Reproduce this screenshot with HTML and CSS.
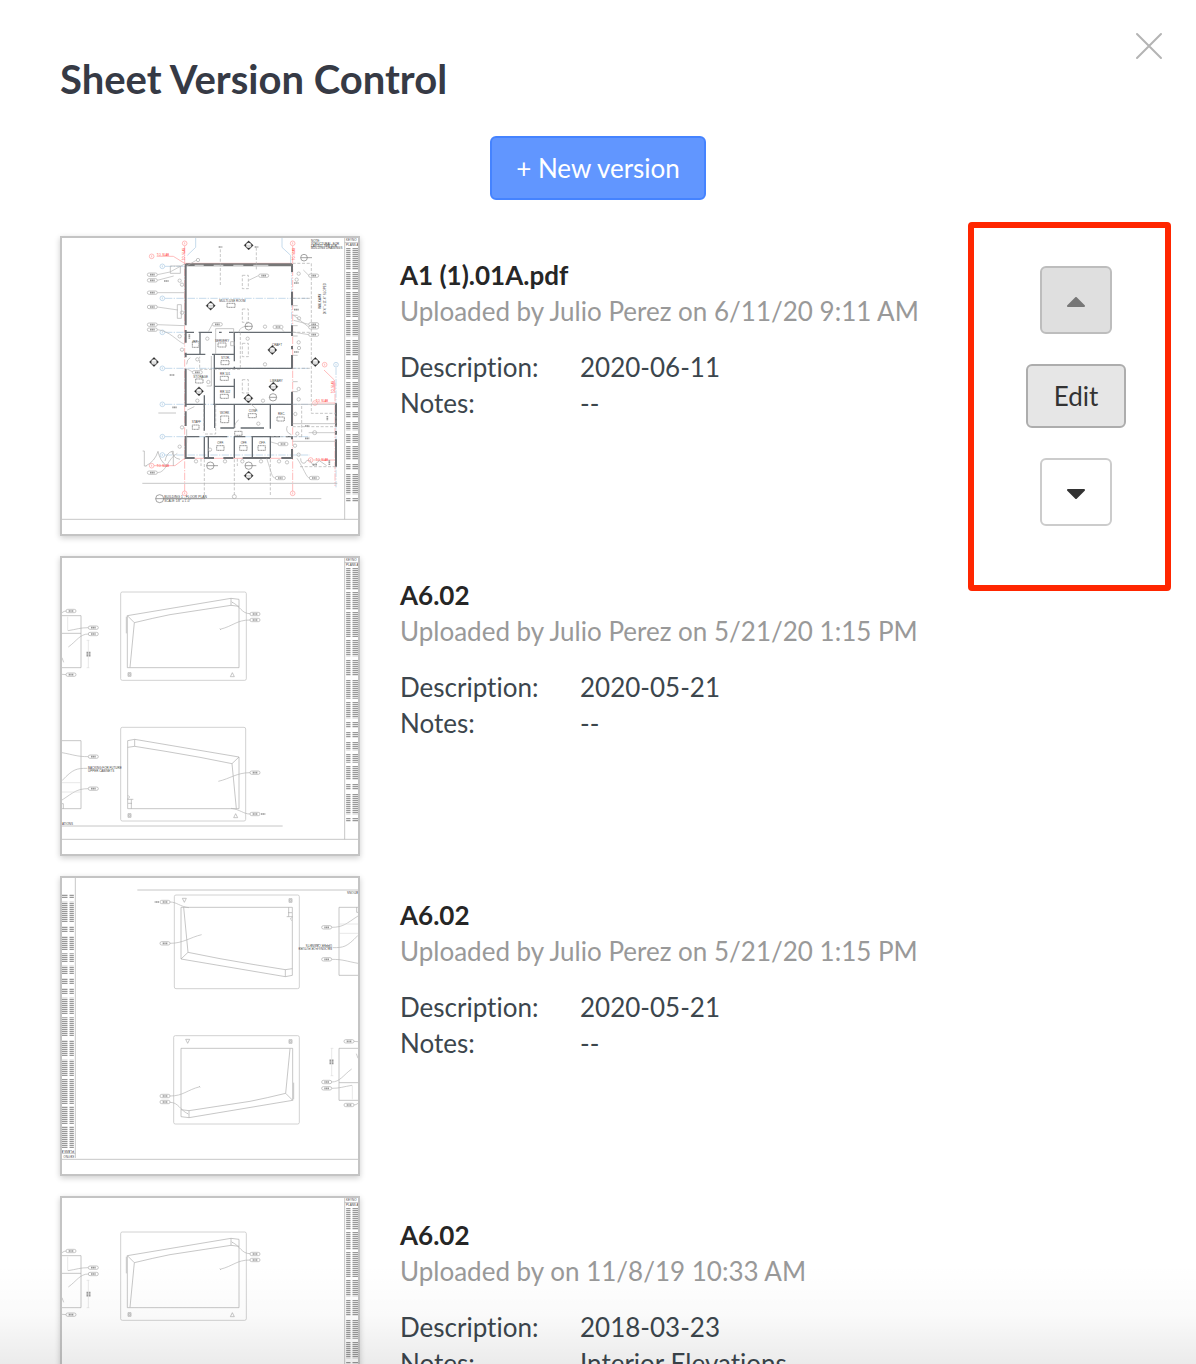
FILE: index.html
```html
<!DOCTYPE html>
<html lang="en">
<head>
    <meta charset="UTF-8">
    <meta name="viewport" content="width=device-width, initial-scale=1.0">
    <title>Sheet Version Control</title>
    <link rel="stylesheet" href="styles.css">
</head>
<body>
    <!-- shared drawing parts -->
    <svg class="defs" width="0" height="0" aria-hidden="true">
        <defs>
            <g id="keynotes">
                <path class="line" d="M884 36V880M884 50H924"/>
                <text class="note" x="888" y="45">KEYNO</text>
                <text class="note" x="888" y="61">PLANS A</text>
                <path class="codes" d="M895 66V131M895 138V190M895 198V273M895 282V331M895 342V390M895 402V458M895 468V517M895 528V546M895 558V576M895 588V613M895 624V650M895 660V701M895 714V732M895 744V805M895 816V828"/>
                <path class="codes wide" d="M916 66V131M916 138V190M916 198V273M916 282V331M916 342V390M916 402V458M916 468V517M916 528V546M916 558V576M916 588V613M916 624V650M916 660V701M916 714V732M916 744V805M916 816V828"/>
            </g>
            <g id="tag">
                <rect class="tag" x="-15" y="-5" width="30" height="10" rx="5"/>
                <path class="tag-text" d="M-7 0H8"/>
            </g>
            <g id="marker">
                <path d="M0-14L14 0L0 14L-14 0Z"/>
                <circle r="8"/>
                <path d="M-8 0H8M-4 4H4"/>
            </g>
            <g id="bubble">
                <circle r="7"/>
                <path d="M0-3V3"/>
            </g>
            <g id="elevations">
                <use href="#keynotes"/>
                <!-- upper elevation -->
                <rect class="frame" x="212" y="138" width="377" height="265" rx="5"/>
                <path class="line" d="M232 209V365H567V160L543 157L232 209L253 230L240 364M543 157V178L567 181M253 230Q310 216 360 206L543 178M229 212V262"/>
                <path class="thin" d="M547 169C570 180 575 203 600 203M510 250C550 240 560 222 600 222M545 167l4 4M509 248l4 4"/>
                <use href="#tag" x="615" y="204"/>
                <use href="#tag" x="615" y="222"/>
                <path class="line" d="M234 380h9v11h-9zM236 383h5v5h-5zM547 380l6 12h-12z"/>
                <!-- lower elevation -->
                <rect class="frame" x="212" y="544" width="375" height="281" rx="5"/>
                <path class="line" d="M233 584V788H567V633L254 580L233 584M233 604L254 601V580M254 601Q350 616 450 634L546 653L567 633M546 653L559 788M232 760H250M234 772H246M244 760V788M234 748l5 5-5 5"/>
                <path class="thin" d="M505 706C540 698 560 680 600 680M543 787C570 790 580 804 600 804"/>
                <use href="#tag" x="615" y="680"/>
                <use href="#tag" x="615" y="804"/>
                <path class="tag-text" d="M633 804H646"/>
                <path class="line" d="M234 803h9v11h-9zM236 806h5v5h-5zM557 803l6 12h-12z"/>
                <!-- neighbours cut by the sheet edge -->
                <path class="line" d="M36 209H93V365H36M36 262H93M36 584H93V788H36M36 773H40V788"/>
                <path class="thin" d="M36 200Q42 195 49 195M54 254C80 250 90 245 115 245M55 303C80 285 90 264 115 264M36 385L49 386M36 620C70 626 80 632 115 632M36 704C70 668 80 667 112 667M36 762C70 740 80 728 115 728M36 335l5 14"/>
                <path class="faint" d="M53 212V254M115 283V365M110 283h8M110 365h8M36 710H93M36 738H93"/>
                <use href="#tag" x="63" y="195"/>
                <use href="#tag" x="130" y="245"/>
                <use href="#tag" x="130" y="264"/>
                <use href="#tag" x="63" y="386"/>
                <use href="#tag" x="130" y="632"/>
                <use href="#tag" x="130" y="728"/>
                <path class="tag-text" d="M112 317V333M119 317V333"/>
                <text class="note" x="114" y="669">BACKING FOR FUTURE</text>
                <text class="note" x="114" y="678">UPPER CABINETS</text>
                <text class="note" x="36" y="837">ATIONS</text>
                <path class="line" d="M36 840H698"/>
            </g>
            <path id="sheet-edge" class="line" d="M36 880H924"/>
        </defs>
    </svg>

    <div class="modal" role="dialog" aria-labelledby="modalTitle">
        <header class="modal-header">
            <h1 id="modalTitle">Sheet Version Control</h1>
            <button class="close" type="button" aria-label="Close">
                <svg width="28" height="28" viewBox="0 0 28 28"><path d="M2 2L26 26M26 2L2 26"/></svg>
            </button>
        </header>

        <button class="button primary" type="button">+ New version</button>

        <ul class="versions">
            <li class="version">
                <svg class="thumb" viewBox="36 36 888 888" role="img" aria-label="Floor plan">
                    <use href="#keynotes"/>
                    <use href="#sheet-edge"/>
                    <!-- grid lines -->
                    <g class="grid-blue">
                        <path d="M345 121H410M345 217H780M345 319H410M345 427H780M345 535H780M345 632H780M345 687H780M858 425V784M725 121V300"/>
                        <path class="solid" d="M437 36V64L412 88M696 36V64L722 88V112"/>
                        <use href="#bubble" x="337" y="121"/>
                        <use href="#bubble" x="337" y="217"/>
                        <use href="#bubble" x="337" y="319"/>
                        <use href="#bubble" x="337" y="427"/>
                        <use href="#bubble" x="337" y="535"/>
                        <use href="#bubble" x="337" y="632"/>
                        <use href="#bubble" x="337" y="687"/>
                        <use href="#bubble" x="858" y="416"/>
                    </g>
                    <g class="grid-red">
                        <path d="M404 60V800M728 60V800M855 470V780"/>
                        <path class="solid" d="M320 91H370L404 112H725M312 719H375L404 697H728M800 531H855M822 432L853 462V500M790 702H855"/>
                        <use href="#bubble" x="404" y="52"/>
                        <use href="#bubble" x="728" y="52"/>
                        <use href="#bubble" x="305" y="91"/>
                        <use href="#bubble" x="404" y="802"/>
                        <use href="#bubble" x="728" y="802"/>
                        <use href="#bubble" x="824" y="416"/>
                        <use href="#bubble" x="795" y="531"/>
                        <use href="#bubble" x="782" y="702"/>
                        <use href="#bubble" x="305" y="719"/>
                    </g>
                    <g class="slab">
                        <text x="320" y="89">T.O. SLAB</text>
                        <text x="320" y="724">T.O. SLAB</text>
                        <text x="797" y="529">T.O. SLAB</text>
                        <text x="797" y="705">T.O. SLAB</text>
                        <text transform="translate(405 103) rotate(-90)">T.O. SLAB</text>
                        <text transform="translate(736 103) rotate(-90)">T.O. SLAB</text>
                        <text transform="translate(852 502) rotate(-90)">T.O. SLAB</text>
                    </g>
                    <!-- walls -->
                    <path class="wall outer" d="M407 114V298M407 312V350M407 380V394M407 428V542M407 556V600M407 630V696H434M462 696H492M520 696H550M578 696H660M694 696H726V669M726 114V138M726 197V238M726 298V330M726 360V370M726 387V428M726 497V600M726 630V640M858 532V602M858 615V626M858 640V722"/>
                    <path class="wall double" d="M407 116H726"/>
                    <path class="wall-gap" d="M434 118H461M491 118H520M550 118H580M610 118H655"/>
                    <path class="wall" d="M407 319H432M446 319H486M507 319H515M537 319H726M450 319V385M407 385H466M486 385H552M553 319V406M553 422V430M553 458V517M493 385V427H726M493 427V535M493 481H553M463 508V614M407 535H466M490 535H726M494 535V606M553 535V606M511 606H553M572 606H642M661 535V608M407 632H448M466 632H532M552 632H586M604 632H690M708 632H726M475 632V696M463 632V696M553 632V696M607 632V696M661 632V696"/>
                    <path class="line" d="M497 319V308H551V342M497 319V385M484 390V480H470M542 347h11v12h-11zM382 236h12v41h-12zM361 120h30v22h-30zM728 593H858M728 646H858M728 535H858M728 239H743M728 299H743M728 268H743M728 330H743M728 388H743M728 467H743M728 497H743M433 542L412 552M410 610V650M566 582Q553 590 555 606M712 600Q704 618 724 626M421 395Q410 400 410 415"/>
                    <path class="dashed" d="M577 148H595V188H577ZM577 249H595V289H577ZM577 352H595V392H577ZM577 461H595V501H577ZM571 319V430H449V392M728 112H784V562H858M728 217H780M728 319H780M728 427H780M755 540V632M461 535V620M497 535V624H463M663 632H755M511 70V178M619 65V130M463 700V808M553 700V808M661 700V808M728 602H858V570M750 722H858M453 698V720M562 698V720"/>
                    <!-- exterior line work -->
                    <path class="line" d="M277 772H862M340 818H814M278 675H283V720H290M287 720Q315 706 324 676Q330 705 349 719M345 705Q350 680 366 676Q368 696 390 700M366 676H370V720M752 697Q752 715 765 711Q775 690 790 719L808 704L830 719M325 561H378"/>
                    <!-- leaders -->
                    <path class="thin" d="M322 146L360 138L404 114M322 163L371 150M322 200H404M322 243L384 252M322 296L404 299M322 311C360 315 380 345 404 355M625 149L596 163M440 102L410 120M760 132L777 149M776 295L731 283M776 303L731 268M776 326L728 318M487 295L475 317M594 301Q570 300 566 319M690 303L702 317M430 439L410 428M595 527L622 552M650 697C665 740 665 756 676 756M741 697C760 725 770 756 778 756M322 740C350 740 350 700 382 682M684 654L663 648M776 620H858"/>
                    <use href="#tag" x="307" y="146"/>
                    <use href="#tag" x="307" y="163"/>
                    <use href="#tag" x="307" y="200"/>
                    <use href="#tag" x="307" y="243"/>
                    <use href="#tag" x="307" y="296"/>
                    <use href="#tag" x="307" y="311"/>
                    <use href="#tag" x="307" y="740"/>
                    <use href="#tag" x="641" y="149"/>
                    <use href="#tag" x="502" y="295"/>
                    <use href="#tag" x="684" y="303"/>
                    <use href="#tag" x="791" y="149"/>
                    <use href="#tag" x="791" y="295"/>
                    <use href="#tag" x="791" y="304"/>
                    <use href="#tag" x="791" y="326"/>
                    <use href="#tag" x="442" y="439"/>
                    <use href="#tag" x="699" y="654"/>
                    <use href="#tag" x="691" y="756"/>
                    <use href="#tag" x="793" y="756"/>
                    <g class="line">
                        <circle cx="444" cy="102" r="5"/><circle cx="389" cy="164" r="5"/>
                        <circle cx="396" cy="176" r="5"/><circle cx="396" cy="260" r="5"/>
                        <circle cx="389" cy="331" r="5"/><circle cx="396" cy="371" r="5"/>
                        <circle cx="472" cy="338" r="5"/><circle cx="593" cy="338" r="5"/>
                        <circle cx="645" cy="302" r="5"/><circle cx="645" cy="415" r="5"/>
                        <circle cx="442" cy="400" r="5"/><circle cx="475" cy="468" r="5"/>
                        <circle cx="442" cy="524" r="5"/><circle cx="639" cy="524" r="5"/>
                        <circle cx="625" cy="593" r="5"/><circle cx="396" cy="604" r="5"/>
                        <circle cx="389" cy="662" r="5"/><circle cx="480" cy="671" r="5"/>
                        <circle cx="438" cy="706" r="5"/><circle cx="525" cy="706" r="5"/>
                        <circle cx="577" cy="706" r="5"/><circle cx="633" cy="706" r="5"/>
                        <circle cx="687" cy="706" r="5"/><circle cx="711" cy="709" r="5"/>
                        <circle cx="746" cy="143" r="5"/><circle cx="740" cy="161" r="5"/>
                        <circle cx="747" cy="277" r="5"/><circle cx="746" cy="349" r="5"/>
                        <circle cx="747" cy="366" r="5"/><circle cx="746" cy="489" r="5"/>
                        <circle cx="746" cy="520" r="5"/><circle cx="736" cy="564" r="5"/>
                        <circle cx="742" cy="623" r="5"/><circle cx="735" cy="659" r="5"/>
                        <circle cx="746" cy="686" r="5"/><circle cx="553" cy="812" r="6"/>
                        <circle cx="794" cy="620" r="6"/>
                    </g>
                    <g class="line dark">
                        <circle cx="762" cy="95" r="10"/><path d="M752 95H786"/>
                        <circle cx="596" cy="301" r="11"/><path d="M585 301H607"/>
                        <circle cx="669" cy="514" r="11"/><path d="M658 514H680"/>
                        <circle cx="481" cy="719" r="11"/><path d="M470 719H504"/>
                        <circle cx="596" cy="719" r="11"/><path d="M585 719H619"/>
                        <circle cx="329" cy="818" r="12"/><path d="M317 818H466"/>
                    </g>
                    <g class="marker">
                        <use href="#marker" x="596" y="58"/>
                        <use href="#marker" x="482" y="239"/>
                        <use href="#marker" x="312" y="408"/>
                        <use href="#marker" x="796" y="408"/>
                        <use href="#marker" x="667" y="372"/>
                        <use href="#marker" x="670" y="482"/>
                        <use href="#marker" x="447" y="496"/>
                        <use href="#marker" x="595" y="517"/>
                        <use href="#marker" x="596" y="749"/>
                    </g>
                    <path class="room" d="M531 232h24v12h-24zM427 346h20v18h-20zM504 351h24v12h-24zM513 404h24v12h-24zM511 451h24v12h-24zM511 505h24v12h-24zM437 459h22v12h-22zM512 570h24v20h-24zM595 563h24v12h-24zM427 597h20v13h-20zM681 573h22v12h-22zM500 659h22v14h-22zM569 659h22v14h-22zM624 659h22v14h-22zM554 616h22v12h-22z"/>
                    <g class="note">
                        <text x="508" y="228">MULTI-USE ROOM</text>
                        <text x="428" y="350">INT.</text>
                        <text x="495" y="348">SERVERY</text>
                        <text x="513" y="400">STOR.</text>
                        <text x="510" y="446">RR 101</text>
                        <text x="510" y="500">RR 102</text>
                        <text x="430" y="456">STORAGE</text>
                        <text x="666" y="360">CRAFT</text>
                        <text x="660" y="467">LIBRARY</text>
                        <text x="510" y="565">WORK</text>
                        <text x="596" y="558">CONF.</text>
                        <text x="425" y="592">STAFF</text>
                        <text x="684" y="568">REC.</text>
                        <text x="502" y="655">OFF.</text>
                        <text x="572" y="655">OFF.</text>
                        <text x="627" y="655">OFF.</text>
                        <text x="783" y="49">NOTE:</text>
                        <text x="783" y="56">STRUCTURAL, FOR</text>
                        <text x="783" y="63">LAYOUT, SEE STR.</text>
                        <text x="783" y="70">BUILDING DRAWINGS</text>
                        <text transform="translate(814 248) rotate(-90)">WALKWAY</text>
                        <text transform="translate(829 265) rotate(-90)">20'-0" x 11'-0" SLOPED</text>
                        <text class="sheet-name" x="343" y="817">BUILDING 1 - FLOOR PLAN</text>
                        <text x="343" y="827">SCALE: 1/8" = 1'-0"</text>
                    </g>
                    <path class="tag-text" d="M506 63H517M614 63H625M359 447H374M367 544H380M342 165H356M732 171H747M732 251H747M732 378H747M765 600H778M765 637H778M418 325V338M832 570V583M838 703V718M788 716H801"/>
                </svg>
                <div class="details">
                    <h2>A1 (1).01A.pdf</h2>
                    <p class="uploaded">Uploaded by Julio Perez on 6/11/20 9:11 AM</p>
                    <dl>
                        <dt>Description:</dt><dd>2020-06-11</dd>
                        <dt>Notes:</dt><dd>--</dd>
                    </dl>
                </div>
                <div class="actions highlighted">
                    <button class="button move" type="button" aria-label="Move up" disabled>
                        <svg width="18" height="10" viewBox="0 0 18 10"><path d="M1 9H17L9 1Z"/></svg>
                    </button>
                    <button class="button edit" type="button">Edit</button>
                    <button class="button move" type="button" aria-label="Move down">
                        <svg width="18" height="10" viewBox="0 0 18 10"><path d="M1 1H17L9 9Z"/></svg>
                    </button>
                </div>
            </li>

            <li class="version">
                <svg class="thumb" viewBox="36 36 888 888" role="img" aria-label="Interior elevations">
                    <use href="#elevations"/>
                    <use href="#sheet-edge"/>
                </svg>
                <div class="details">
                    <h2>A6.02</h2>
                    <p class="uploaded">Uploaded by Julio Perez on 5/21/20 1:15 PM</p>
                    <dl>
                        <dt>Description:</dt><dd>2020-05-21</dd>
                        <dt>Notes:</dt><dd>--</dd>
                    </dl>
                </div>
            </li>

            <li class="version">
                <!-- same sheet, scanned upside down -->
                <svg class="thumb" viewBox="36 36 888 888" role="img" aria-label="Interior elevations, upside down">
                    <use href="#elevations" transform="translate(960 912) rotate(180)"/>
                    <use href="#sheet-edge"/>
                </svg>
                <div class="details">
                    <h2>A6.02</h2>
                    <p class="uploaded">Uploaded by Julio Perez on 5/21/20 1:15 PM</p>
                    <dl>
                        <dt>Description:</dt><dd>2020-05-21</dd>
                        <dt>Notes:</dt><dd>--</dd>
                    </dl>
                </div>
            </li>

            <li class="version">
                <svg class="thumb" viewBox="36 36 888 888" role="img" aria-label="Interior elevations">
                    <use href="#elevations"/>
                    <use href="#sheet-edge"/>
                </svg>
                <div class="details">
                    <h2>A6.02</h2>
                    <p class="uploaded">Uploaded by on 11/8/19 10:33 AM</p>
                    <dl>
                        <dt>Description:</dt><dd>2018-03-23</dd>
                        <dt>Notes:</dt><dd>Interior Elevations</dd>
                    </dl>
                </div>
            </li>
        </ul>
    </div>
</body>
</html>
```
FILE: styles.css
```css
* {
    box-sizing: border-box;
}
body {
    margin: 0;
    background: #fff;
    color: #3c464d;
    font-family: Lato, "Liberation Sans", sans-serif;
    font-size: 26px;
    line-height: 36px;
    font-variant-ligatures: none;
}
h1, h2, p, dl, dd, ul {
    margin: 0;
    padding: 0;
}
.defs {
    position: absolute;
}
.modal {
    position: relative;
    display: flex;
    flex-direction: column;
    height: 100vh;
    overflow: hidden;
}
/* fade over the list where it is cut off */
.modal::after {
    content: "";
    position: absolute;
    left: 0;
    right: 0;
    bottom: 0;
    height: 100px;
    background: linear-gradient(rgba(0, 0, 0, 0), rgba(0, 0, 0, 0.02) 50%, rgba(0, 0, 0, 0.08));
    pointer-events: none;
}
.modal-header {
    display: flex;
    justify-content: space-between;
    align-items: flex-start;
    padding: 55px 33px 0 60px;
}
h1 {
    color: #363a45;
    font-size: 40px;
    line-height: 48px;
}
.close {
    display: flex;
    margin-top: -23px;
    padding: 0;
    border: none;
    background: none;
    cursor: pointer;
}
.close path {
    fill: none;
    stroke: #b4b4b4;
    stroke-width: 2;
    stroke-linecap: round;
}
.button {
    display: flex;
    align-items: center;
    justify-content: center;
    height: 64px;
    padding: 0 24px;
    border: 2px solid #ccc;
    border-radius: 6px;
    background: #fff;
    color: #333;
    font: inherit;
    cursor: pointer;
}
.button.primary {
    flex-shrink: 0;
    align-self: center;
    margin: 33px 0 36px;
    border-color: #4583ff;
    background: #6196ff;
    color: #fff;
}
.button.edit {
    width: 100px;
    border-color: #adadad;
    background: #e6e6e6;
}
.button.move {
    width: 72px;
    height: 68px;
    padding: 3px 0 0;
}
.button.move path {
    fill: #333;
    stroke: #333;
    stroke-width: 2;
    stroke-linejoin: round;
}
.button.move:disabled {
    border-color: #bdbdbd;
    background: #dfdfdf;
    cursor: default;
}
.button.move:disabled path {
    fill: #777;
    stroke: #777;
}
.versions {
    flex: 1;
    min-height: 0;
    padding: 0 60px;
    list-style: none;
}
.version {
    display: flex;
    gap: 40px;
    margin-bottom: 20px;
}
.thumb {
    flex-shrink: 0;
    width: 300px;
    height: 300px;
    border: 2px solid #c4c4c4;
    background: #fff;
    box-shadow: 0 2px 6px rgba(0, 0, 0, 0.2);
}
.details {
    flex: 1;
    padding-top: 21px;
}
.details h2 {
    color: #262626;
    font-size: 26px;
    line-height: 36px;
}
.uploaded {
    color: #999;
}
.details dl {
    display: grid;
    grid-template-columns: 180px 1fr;
    margin-top: 20px;
}
.actions {
    position: relative;
    display: flex;
    flex-direction: column;
    align-items: center;
    gap: 30px;
    width: 120px;
    padding-top: 30px;
}
.highlighted::after {
    content: "";
    position: absolute;
    top: -14px;
    right: -35px;
    bottom: -55px;
    left: -48px;
    border: 6px solid #ff2600;
    border-radius: 4px;
    pointer-events: none;
}

/* drawings */
.line, .thin, .frame, .faint, .dashed, .room {
    fill: none;
    stroke: #aaa;
    stroke-width: 2;
}
.line.dark {
    stroke: #777;
}
.thin {
    stroke: #b4b4b4;
}
.frame {
    stroke: #bbb;
}
.faint {
    stroke: #ddd;
}
.dashed {
    stroke-dasharray: 9 5;
}
.room {
    stroke: #999;
    stroke-width: 3;
    stroke-dasharray: 4 1;
}
.tag {
    fill: #fff;
    stroke: #aaa;
    stroke-width: 2;
}
.tag-text {
    fill: none;
    stroke: #999;
    stroke-width: 5;
    stroke-dasharray: 4 1;
}
.codes {
    fill: none;
    stroke: #999;
    stroke-width: 13;
    stroke-dasharray: 4 2;
}
.codes.wide {
    stroke-width: 17;
}
.note {
    fill: #444;
    font-family: "Liberation Sans", sans-serif;
    font-size: 9px;
}
.sheet-name {
    font-size: 10px;
}
.slab {
    fill: #f33;
    font-family: "Liberation Sans", sans-serif;
    font-size: 8px;
}
.grid-blue, .grid-red {
    fill: none;
    stroke-width: 2;
}
.grid-blue {
    stroke: #a9c9e2;
    stroke-dasharray: 22 4 4 4;
}
.grid-red {
    stroke: #ff9c9c;
    stroke-dasharray: 22 4 4 4;
}
.grid-blue .solid, .grid-red .solid, .grid-blue use, .grid-red use {
    stroke-dasharray: none;
}
.wall {
    fill: none;
    stroke: #666c72;
    stroke-width: 4;
}
.wall.outer {
    stroke: #6e7074;
    stroke-width: 6;
}
.wall.double {
    stroke: #777;
    stroke-width: 9;
}
.wall-gap {
    fill: none;
    stroke: #ccc;
    stroke-width: 4;
}
.marker {
    fill: #222;
}
.marker use {
    stroke: #777;
    stroke-width: 1;
}
#marker circle {
    fill: #fff;
}
```
